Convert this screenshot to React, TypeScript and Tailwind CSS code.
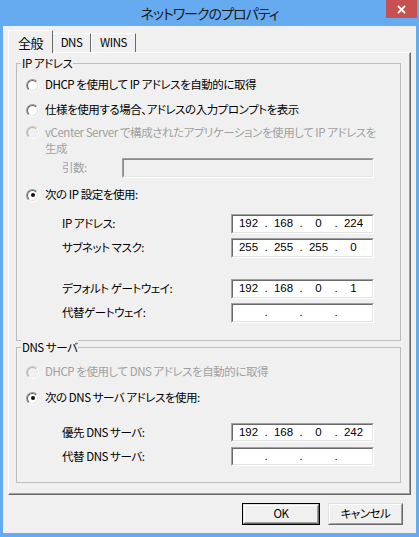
import React from 'react'

function Radio({ checked, disabled }: { checked?: boolean; disabled?: boolean }) {
  return (
    <span
      className={
        disabled
          ? 'flex h-[13px] w-[13px] shrink-0 rounded-full border border-t-[#c4c4c4] border-l-[#c4c4c4] border-r-white border-b-white'
          : 'flex h-[13px] w-[13px] shrink-0 rounded-full border border-t-[#9a9a9a] border-l-[#9a9a9a] border-r-white border-b-white'
      }
    >
      <span
        className={
          disabled
            ? 'flex h-full w-full items-center justify-center rounded-full border border-t-[#b4b4b4] border-l-[#b4b4b4] border-r-[#ececec] border-b-[#ececec] bg-[#f0f0f0]'
            : 'flex h-full w-full items-center justify-center rounded-full border border-t-[#5f5f5f] border-l-[#5f5f5f] border-r-[#e3e3e3] border-b-[#e3e3e3] bg-white'
        }
      >
        {checked && <span className="h-[4px] w-[4px] rounded-full bg-[#111]" />}
      </span>
    </span>
  )
}

function Sunken({ className, disabled, children }: { className: string; disabled?: boolean; children?: React.ReactNode }) {
  return (
    <div className={`shrink-0 border border-t-[#a0a0a0] border-l-[#a0a0a0] border-r-white border-b-white ${className}`}>
      <div
        className={
          disabled
            ? 'flex h-full items-center border border-t-[#8a8a8a] border-l-[#8a8a8a] border-r-[#e6e6e6] border-b-[#e6e6e6] bg-[#f0f0f0]'
            : 'flex h-full items-center border border-t-[#696969] border-l-[#696969] border-r-[#e3e3e3] border-b-[#e3e3e3] bg-white'
        }
      >
        {children}
      </div>
    </div>
  )
}

function IpBox({ parts, tall = true }: { parts: string[]; tall?: boolean }) {
  return (
    <Sunken className={tall ? 'h-[20px] w-[143px]' : 'h-[19px] w-[143px]'}>
      <div className="flex w-full font-['Liberation_Sans',sans-serif] text-[11.5px] leading-none tracking-normal text-black">
        {parts.map((p, i) => (
          <React.Fragment key={i}>
            <span className="w-[31px] text-center">{p}</span>
            {i < 3 && <span className="w-[4px] text-center">.</span>}
          </React.Fragment>
        ))}
      </div>
    </Sunken>
  )
}

function Field({ label, parts, tall = true, className = '' }: { label: string; parts: string[]; tall?: boolean; className?: string }) {
  return (
    <div className={`flex items-center pl-[45px] ${className}`}>
      <span className="w-[169px]">{label}</span>
      <IpBox parts={parts} tall={tall} />
    </div>
  )
}

function Option({ checked, disabled, children, className = '' }: { checked?: boolean; disabled?: boolean; children: React.ReactNode; className?: string }) {
  return (
    <div className={`flex h-[22px] items-center pl-[9px] ${disabled ? 'text-[#a0a0a0]' : 'text-black'} ${className}`}>
      <Radio checked={checked} disabled={disabled} />
      <span className="ml-[6px]">{children}</span>
    </div>
  )
}

function Group({ title, className, children }: { title: string; className: string; children: React.ReactNode }) {
  return (
    <div className={`relative border border-[#bdbdbd] ${className}`}>
      <span className="absolute -top-[9px] left-[4px] bg-[#f0f0f0] px-[1px] leading-[16px]">{title}</span>
      {children}
    </div>
  )
}

function Button({ isDefault, children }: { isDefault?: boolean; children: React.ReactNode }) {
  return (
    <div className={isDefault ? 'h-[22px] w-[78px] border border-black' : 'h-[22px] w-[75px]'}>
      <div className="h-full border border-t-[#e3e3e3] border-l-[#e3e3e3] border-r-[#696969] border-b-[#696969]">
        <div className="flex h-full items-center justify-center border border-t-white border-l-white border-r-[#a0a0a0] border-b-[#a0a0a0] bg-[#f0f0f0]">
          {children}
        </div>
      </div>
    </div>
  )
}

export default function App() {
  return (
    <div className="flex h-[537px] w-[419px] flex-col bg-[#66abef] font-['Noto_Sans_CJK_JP',sans-serif] text-[11.5px] leading-none tracking-[-0.45px] text-black [font-feature-settings:'palt']">
      {/* title bar */}
      <div className="grid h-[26px] shrink-0 grid-cols-[1fr_auto_1fr]">
        <div />
        <div className="self-center pb-[1px] text-[14px] tracking-[-1px] text-[#1a1a1a]">ネットワークのプロパティ</div>
        <div className="flex justify-end pr-[2px]">
          <div className="flex h-[18px] w-[31px] items-center justify-center bg-[#c75050]">
            <svg width="9" height="9" viewBox="0 0 9 9">
              <path d="M1 1 L8 8 M8 1 L1 8" stroke="white" strokeWidth="1.8" />
            </svg>
          </div>
        </div>
      </div>

      {/* client area */}
      <div className="mx-[3px] mb-[4px] flex flex-1 flex-col bg-[#f0f0f0] px-[5px] pt-[4px]">
        {/* tabs */}
        <div className="flex h-[22px] items-end">
          <div className="relative z-10 -mb-[1px] flex h-[23px] w-[45px] items-start justify-center border-l border-t border-r border-l-white border-t-white border-r-[#696969] bg-[#f0f0f0] pt-[5px] text-[13px]">
            全般
          </div>
          <div className="flex h-[19px] w-[38px] items-center justify-center border-t border-r border-t-white border-r-[#696969] pb-[1px]">
            DNS
          </div>
          <div className="flex h-[19px] w-[45px] items-center justify-center border-l border-t border-r border-l-white border-t-white border-r-[#696969] pb-[1px]">
            WINS
          </div>
        </div>

        {/* panel */}
        <div className="h-[443px] border border-t-white border-l-white border-r-[#696969] border-b-[#696969]">
          <div className="h-full border-r border-b border-r-[#a0a0a0] border-b-[#a0a0a0] pl-[7px] pr-[8px] pt-[10px]">
            <Group title="IP アドレス" className="pb-[17px] pt-[10px]">
              <Option>DHCP を使用して IP アドレスを自動的に取得</Option>
              <Option className="mt-[3px]">仕様を使用する場合、アドレスの入力プロンプトを表示</Option>
              <div className="mt-[3px] flex items-start pl-[9px] text-[#a0a0a0]">
                <span className="mt-[2px]">
                  <Radio disabled />
                </span>
                <span className="ml-[6px] leading-[16px]">
                  vCenter Server で構成されたアプリケーションを使用して IP アドレスを
                  <br />
                  生成
                </span>
              </div>
              <div className="mt-[2px] flex items-center pl-[45px] text-[#a0a0a0]">
                <span className="w-[60px]">引数:</span>
                <Sunken disabled className="h-[20px] w-[252px]" />
              </div>
              <Option checked className="mt-[6px]">
                次の IP 設定を使用:
              </Option>
              <Field className="mt-[8px]" label="IP アドレス:" parts={['192', '168', '0', '224']} />
              <Field className="mt-[4px]" label="サブネット マスク:" parts={['255', '255', '255', '0']} />
              <Field className="mt-[21px]" label="デフォルト ゲートウェイ:" parts={['192', '168', '0', '1']} />
              <Field className="mt-[4px]" label="代替ゲートウェイ:" parts={['', '', '', '']} />
            </Group>

            <Group title="DNS サーバ" className="mt-[6px] pb-[16px] pt-[13px]">
              <Option disabled>DHCP を使用して DNS アドレスを自動的に取得</Option>
              <Option checked className="mt-[4px]">
                次の DNS サーバ アドレスを使用:
              </Option>
              <Field className="mt-[14px]" tall={false} label="優先 DNS サーバ:" parts={['192', '168', '0', '242']} />
              <Field className="mt-[5px]" tall={false} label="代替 DNS サーバ:" parts={['', '', '', '']} />
            </Group>
          </div>
        </div>

        {/* buttons */}
        <div className="mt-[8px] flex justify-end gap-[8px] pr-[8px]">
          <Button isDefault>OK</Button>
          <Button>キャンセル</Button>
        </div>
      </div>
    </div>
  )
}
